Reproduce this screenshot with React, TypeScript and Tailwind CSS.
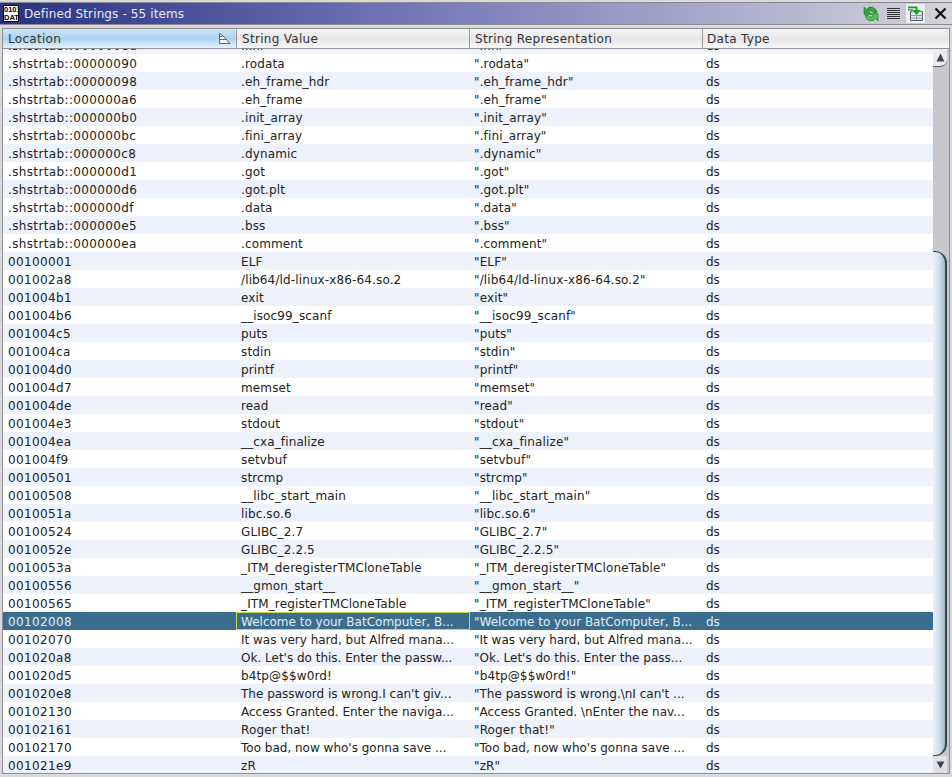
import React from 'react';

const rows: [string, string, string][] = [
  ['.shstrtab::00000090', '.rodata', '".rodata"'],
  ['.shstrtab::00000098', '.eh_frame_hdr', '".eh_frame_hdr"'],
  ['.shstrtab::000000a6', '.eh_frame', '".eh_frame"'],
  ['.shstrtab::000000b0', '.init_array', '".init_array"'],
  ['.shstrtab::000000bc', '.fini_array', '".fini_array"'],
  ['.shstrtab::000000c8', '.dynamic', '".dynamic"'],
  ['.shstrtab::000000d1', '.got', '".got"'],
  ['.shstrtab::000000d6', '.got.plt', '".got.plt"'],
  ['.shstrtab::000000df', '.data', '".data"'],
  ['.shstrtab::000000e5', '.bss', '".bss"'],
  ['.shstrtab::000000ea', '.comment', '".comment"'],
  ['00100001', 'ELF', '"ELF"'],
  ['001002a8', '/lib64/ld-linux-x86-64.so.2', '"/lib64/ld-linux-x86-64.so.2"'],
  ['001004b1', 'exit', '"exit"'],
  ['001004b6', '__isoc99_scanf', '"__isoc99_scanf"'],
  ['001004c5', 'puts', '"puts"'],
  ['001004ca', 'stdin', '"stdin"'],
  ['001004d0', 'printf', '"printf"'],
  ['001004d7', 'memset', '"memset"'],
  ['001004de', 'read', '"read"'],
  ['001004e3', 'stdout', '"stdout"'],
  ['001004ea', '__cxa_finalize', '"__cxa_finalize"'],
  ['001004f9', 'setvbuf', '"setvbuf"'],
  ['00100501', 'strcmp', '"strcmp"'],
  ['00100508', '__libc_start_main', '"__libc_start_main"'],
  ['0010051a', 'libc.so.6', '"libc.so.6"'],
  ['00100524', 'GLIBC_2.7', '"GLIBC_2.7"'],
  ['0010052e', 'GLIBC_2.2.5', '"GLIBC_2.2.5"'],
  ['0010053a', '_ITM_deregisterTMCloneTable', '"_ITM_deregisterTMCloneTable"'],
  ['00100556', '__gmon_start__', '"__gmon_start__"'],
  ['00100565', '_ITM_registerTMCloneTable', '"_ITM_registerTMCloneTable"'],
  ['00102008', 'Welcome to your BatComputer, B...', '"Welcome to your BatComputer, B...'],
  ['00102070', 'It was very hard, but Alfred mana...', '"It was very hard, but Alfred mana...'],
  ['001020a8', "Ok. Let's do this. Enter the passw...", '"Ok. Let\'s do this. Enter the pass...'],
  ['001020d5', 'b4tp@$$w0rd!', '"b4tp@$$w0rd!"'],
  ['001020e8', "The password is wrong.I can't giv...", '"The password is wrong.\\nI can\'t ...'],
  ['00102130', 'Access Granted. Enter the naviga...', '"Access Granted. \\nEnter the nav...'],
  ['00102161', 'Roger that!', '"Roger that!"'],
  ['00102170', "Too bad, now who's gonna save ...", '"Too bad, now who\'s gonna save ...'],
  ['001021e9', 'zR', '"zR"'],
];

const SELECTED = '00102008';

function HeaderCell({ label, sorted, width }: { label: string; sorted?: boolean; width: string }) {
  return (
    <div className={`${width} shrink-0 h-full flex items-center justify-between pl-[5px] pr-[4px] border-r border-[#9a9a9a] tracking-[0.3px] ${sorted ? 'bg-gradient-to-b from-[#cfe4f6] via-[#a9d3f2] to-[#e6f1fa]' : ''}`}>
      <span>{label}</span>
      {sorted && (
        <svg width="13" height="13" viewBox="0 0 13 13" className="mr-[1px]">
          <path d="M1.5 1.5v10h10.5L8 7 4 3z M1.5 7.5H8 M1.5 4.5H4.5" fill="#f4f4f4" stroke="#5d6a78" strokeWidth="1" />
        </svg>
      )}
    </div>
  );
}

function ZebraRow({ row, index }: { row: [string, string, string]; index: number }) {
  const selected = row[0] === SELECTED;
  const clipped = row[1].endsWith('...');
  const bg = selected ? 'bg-[#3b6d8f] text-[#e4eef5]' : index % 2 === 0 ? 'bg-white' : 'bg-[#edf2fc]';
  return (
    <div className={`flex h-[18px] leading-[20px] ${bg}`}>
      <div className="w-[233px] shrink-0 pl-[5px] truncate tracking-[0.36px]">{row[0]}</div>
      <div className={`w-[234px] shrink-0 whitespace-nowrap overflow-hidden ${clipped ? '' : 'tracking-[0.13px]'} ${selected ? 'border border-[#c4d94c] pl-[4px] leading-[18px]' : 'pl-[5px]'}`}>{row[1]}</div>
      <div className={`w-[232px] shrink-0 pl-[4px] whitespace-nowrap overflow-hidden ${clipped ? '' : 'tracking-[0.13px]'}`}>{row[2]}</div>
      <div className="flex-1 pl-[4px]">ds</div>
    </div>
  );
}

function Scrollbar() {
  return (
    <div className="w-[16px] shrink-0 bg-[#c8c8cc] flex flex-col">
      <div className="h-[18px] w-[14px] flex items-center justify-center bg-[#e9ebee] shrink-0 rounded-br-[7px] border-b border-[#5b6068]">
        <svg width="9" height="9" viewBox="0 0 9 9"><path d="M4.5 0.5 8.5 8.5H0.5z" fill="#3f444a" /></svg>
      </div>
      <div className="flex-1 w-full flex flex-col justify-end">
        <div className="h-[505px] w-[14px] rounded-tr-[12px] rounded-br-[12px] border-r-2 border-t border-b border-[#3d4650] bg-gradient-to-r from-[#e9f2f7] via-[#cfe2ec] to-[#a3b9c8]" />
      </div>
      <div className="h-[17px] w-[14px] flex items-center justify-center bg-[#dfe0e3] shrink-0">
        <svg width="9" height="8" viewBox="0 0 9 8"><path d="M0.5 0.5H8.5L4.5 7.5z" fill="#3f444a" /></svg>
      </div>
    </div>
  );
}

export default function App() {
  return (
    <div className="w-[952px] h-[777px] bg-[#d9d9dc] overflow-hidden text-[12px] text-[#222] flex flex-col" style={{ fontFamily: '"DejaVu Sans", sans-serif' }}>
      <div className="mt-[2px] h-[23px] shrink-0 flex items-center border-y border-[#8a8a90] bg-gradient-to-r from-[#293182] via-[#6f72b4] via-40% to-[#d4d4da]">
        <div className="ml-[3px] w-[16px] h-[17px] bg-white border border-black text-black font-bold text-[7.5px] leading-[7.5px] text-center overflow-hidden" style={{ fontFamily: '"Liberation Sans", sans-serif' }}>
          0101<br />DAT
        </div>
        <span className="ml-[5px] text-[12px] tracking-[0.12px] text-[#e6e8f4]">Defined Strings - 55 items</span>
        <div className="ml-auto flex items-center">
          <svg width="18" height="18" viewBox="0 0 17 17" className="mr-[7px]">
            <path d="M14 7A5.6 5.6 0 0 0 4 4.3L2 2v6.8h6.6L6 6.4A3.4 3.4 0 0 1 11 7z" fill="#2fa83a" stroke="#187a22" strokeWidth="0.7" />
            <path d="M3 10A5.6 5.6 0 0 0 13 12.7l2 2.3V8.2H8.4l2.6 2.4a3.4 3.4 0 0 1-5-.6z" fill="#4acb50" stroke="#187a22" strokeWidth="0.7" />
          </svg>
          <svg width="13" height="13" viewBox="0 0 13 13" className="mr-[5px]">
            <path d="M0 1.5h13M0 3.5h13M0 5.5h13M0 7.5h13M0 9.5h13M0 11.5h13" stroke="#333" strokeWidth="1" />
          </svg>
          <div className="w-[21px] h-[21px] flex items-center justify-center bg-[#eef0f2] border border-[#c8ccd2]">
            <svg width="18" height="18" viewBox="0 0 18 18">
              <path d="M5.5 6.5H3.5v9h12v-9h-2" fill="#dfe8ee" stroke="#555" />
              <path d="M3.5 10.5h12M3.5 13h12M9.5 10.5v5" stroke="#8a98a4" />
              <path d="M1 1.5h9.5v3.5H14L9.5 10 5 5h3.5V3.2H1zM1 4.2h5v1.4H1z" fill="#1d9a2c" />
            </svg>
          </div>
          <svg width="13" height="13" viewBox="0 0 13 13" className="ml-[8px] mr-[5px]">
            <path d="M1.5 1.5 11.5 11.5M11.5 1.5 1.5 11.5" stroke="#111" strokeWidth="2.2" />
          </svg>
        </div>
      </div>
      <div className="mt-[3px] mx-[2px] h-[746px] shrink-0 flex flex-col border border-[#8f8f94] bg-white overflow-hidden">
        <div className="h-[20px] shrink-0 flex bg-gradient-to-b from-[#f4f4f5] via-[#e7e7e9] to-[#f7f7f8] border-b border-[#8f8f94] text-[#333]">
          <HeaderCell label="Location" sorted width="w-[234px]" />
          <HeaderCell label="String Value" width="w-[233px]" />
          <HeaderCell label="String Representation" width="w-[233px]" />
          <div className="flex-1 flex items-center pl-[4px] tracking-[0.3px]">Data Type</div>
        </div>
        <div className="flex-1 flex min-h-0">
          <div className="flex-1 overflow-hidden min-w-0">
            {/* row scrolled mostly out of view: only the descender part shows */}
            <div className="h-[5px] overflow-hidden bg-[#edf2fc] flex leading-[20px]">
              <div className="w-[233px] shrink-0 pl-[5px] -mt-[13px] tracking-[0.36px] whitespace-nowrap">.shstrtab::0000008d</div>
              <div className="w-[234px] shrink-0 pl-[5px] -mt-[13px]">.fini</div>
              <div className="w-[232px] shrink-0 pl-[4px] -mt-[13px]">".fini"</div>
              <div className="flex-1 pl-[4px] -mt-[13px]">ds</div>
            </div>
            {rows.map((row, i) => (
              <ZebraRow key={row[0]} row={row} index={i} />
            ))}
          </div>
          <Scrollbar />
        </div>
      </div>
    </div>
  );
}
